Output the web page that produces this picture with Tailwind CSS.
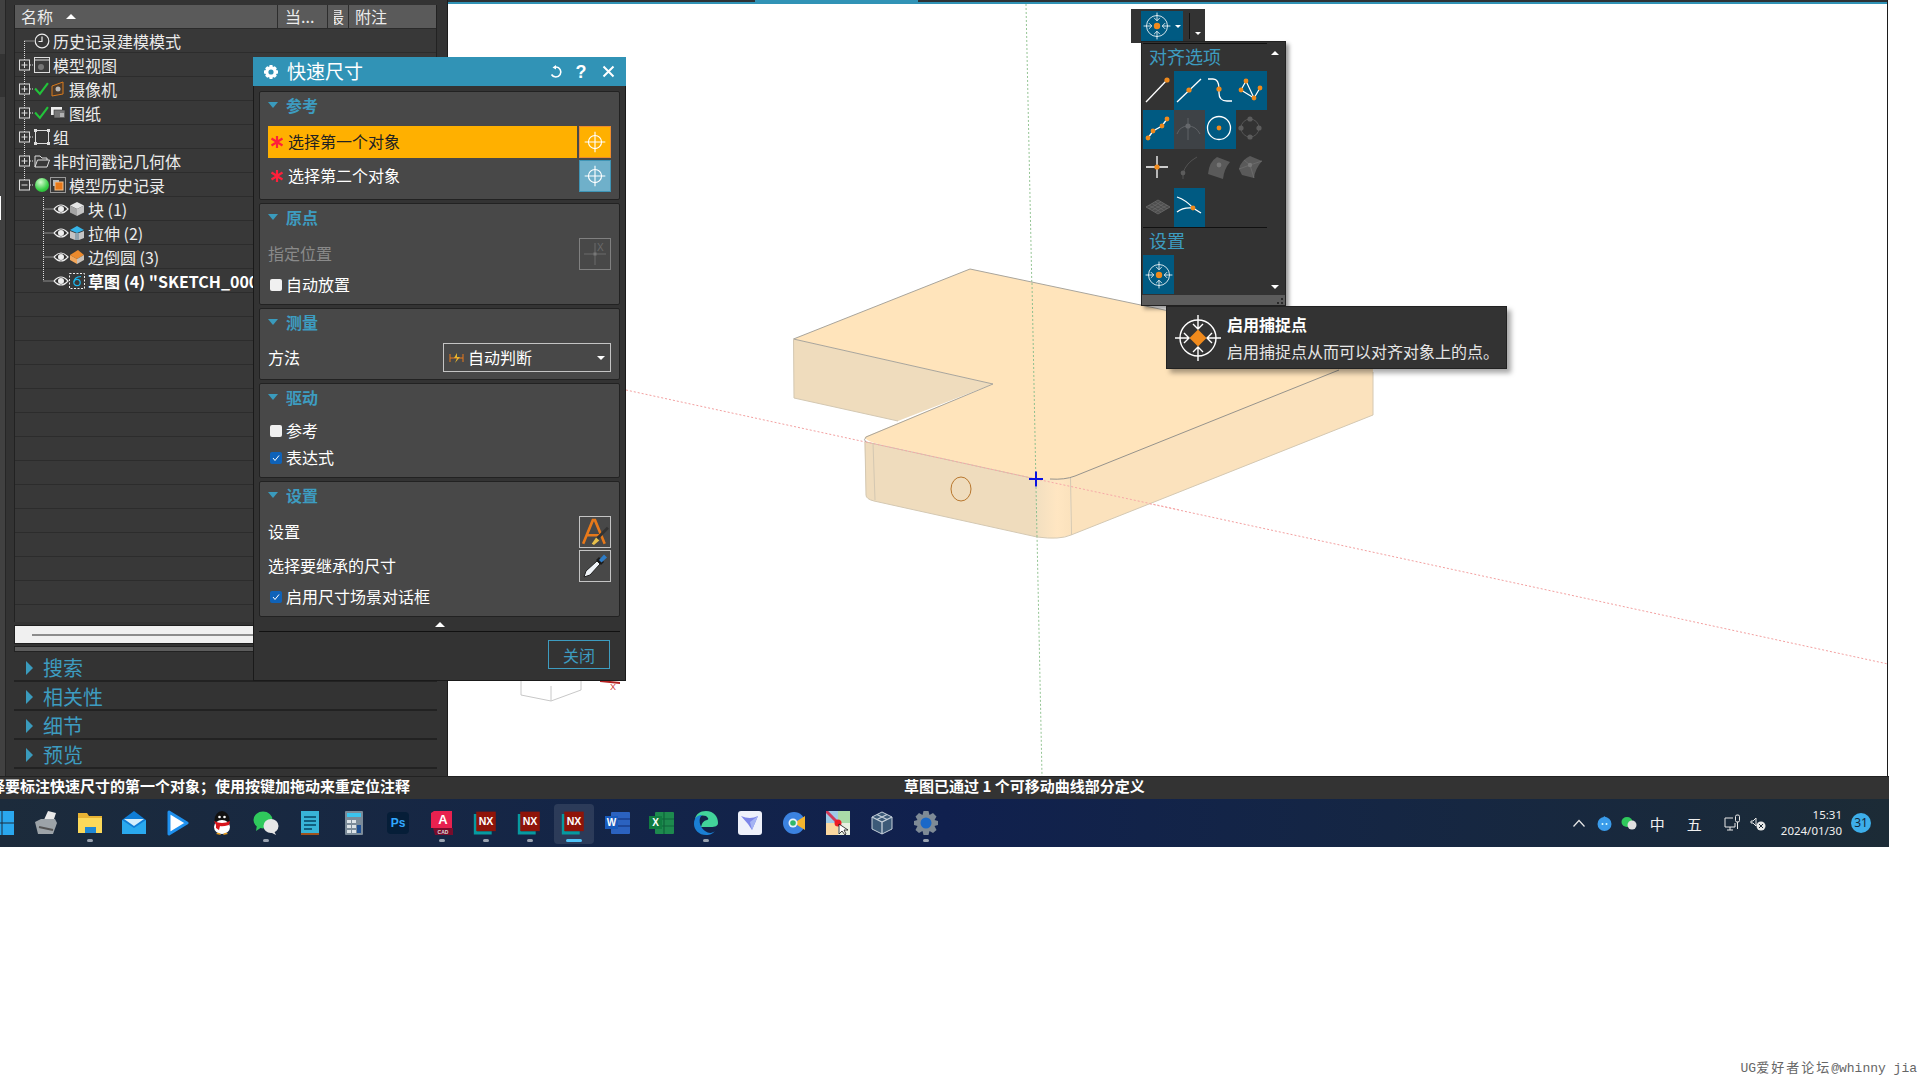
<!DOCTYPE html>
<html lang="en">
<head>
<meta charset="UTF-8">
<title>NX 快速尺寸</title>
<script src="https://cdn.jsdelivr.net/npm/@tailwindcss/browser@4"></script>
</head>
<body class="bg-white overflow-hidden [font-family:'Noto_Sans_CJK_SC',sans-serif]">

<!-- shared icons -->
<svg class="hidden" width="0" height="0">
  <defs>
    <symbol id="snap" viewBox="0 0 48 48">
      <g fill="none" stroke="#fff" stroke-width="1.4">
        <circle cx="24" cy="24" r="18"/>
        <path d="M24 1V15M19 10l5 5 5-5M24 47V33M19 38l5-5 5 5M1 24H15M10 19l5 5-5 5M47 24H33M38 19l-5 5 5 5"/>
      </g>
    </symbol>
    <symbol id="cross" viewBox="0 0 32 32">
      <g fill="none" stroke="#fff" stroke-width="1.2">
        <circle cx="16" cy="16" r="7"/>
        <path d="M16 5V27M5 16H27"/>
      </g>
    </symbol>
    <symbol id="star" viewBox="0 0 14 14">
      <path d="M7 1V13M1.5 3.5L12.5 10.5M12.5 3.5L1.5 10.5" stroke="#ff1f3a" stroke-width="2.2" fill="none"/>
    </symbol>
    <symbol id="eye" viewBox="0 0 16 14">
      <path d="M1 7Q8 -1 15 7Q8 15 1 7Z" fill="#333" stroke="#eee" stroke-width="1.2"/>
      <circle cx="8" cy="7" r="3" fill="#eee"/>
    </symbol>
    <symbol id="expand" viewBox="0 0 19 24">
      <path d="M9.5 0V24M15 12H19" stroke="#ddd" stroke-dasharray="1 1" fill="none"/>
      <rect x="4.5" y="7" width="10" height="10" fill="#383838" stroke="#ddd"/>
      <path d="M6.5 12H12.5M9.5 9V15" stroke="#ddd"/>
    </symbol>
    <symbol id="branch" viewBox="0 0 38 24">
      <path d="M28.5 0V24M28.5 12H38" stroke="#ddd" stroke-dasharray="1 1" fill="none"/>
    </symbol>
    <symbol id="check" viewBox="0 0 14 14">
      <path d="M1 7L5.5 12L13 2" stroke="#22c43a" stroke-width="2" fill="none"/>
    </symbol>
    <symbol id="nx" viewBox="0 0 32 32">
      <path d="M1 5H5V26H23V30H1Z" fill="#079aa0"/>
      <rect x="4" y="2" width="24" height="24" fill="#8e1409"/>
      <text x="16" y="19" text-anchor="middle" font-size="13" font-weight="700" fill="#fff" font-family="Liberation Sans">NX</text>
    </symbol>
  </defs>
</svg>

<div class="relative w-[1889px] h-[847px] overflow-hidden">
  <div class="flex h-[776px]">

    <!-- left navigator -->
    <div class="flex w-[448px] shrink-0 bg-[#333] border-r border-[#1c1c1c]">
      <div class="w-[5px] flex flex-col shrink-0">
        <div class="h-[54px] bg-[#414141]"></div>
        <div class="h-[43px] bg-[#333]"></div>
        <div class="h-[99px] bg-[#414141]"></div>
        <div class="h-[24px] bg-[#414141] border-l border-white"></div>
        <div class="flex-1 bg-[#414141]"></div>
      </div>
      <div class="w-[9px] shrink-0 border-l border-[#262626]"></div>

      <div class="w-[423px] shrink-0 flex flex-col">
        <!-- tree table -->
        <div class="mt-[5px] h-[617px] overflow-hidden border-x border-[#222] text-[16px] text-[#ececec] bg-[#383838]">
          <div class="flex h-[24px] bg-[#5a5a5a] border-b border-[#2a2a2a] leading-[23px]">
            <div class="w-[263px] border-r border-[#2d2d2d] pl-[6px] flex items-center gap-[13px]">
              <span>名称</span>
              <span class="w-0 h-0 border-x-[5px] border-x-transparent border-b-[5px] border-b-white"></span>
            </div>
            <div class="w-[50px] border-r border-[#2d2d2d] pl-[7px]">当...</div>
            <div class="w-[21px] border-r border-[#2d2d2d] pl-[6px]"><div class="w-[10px] overflow-hidden"><div class="-ml-[6px] w-[16px]">最</div></div></div>
            <div class="flex-1 pl-[6px]">附注</div>
          </div>

          <div class="flex items-center h-6 border-b border-[#2c2c2c] whitespace-nowrap">
            <svg class="w-[19px] h-6 shrink-0" viewBox="0 0 19 24"><path d="M9.5 12V24M9.5 12H19" stroke="#ddd" stroke-dasharray="1 1" fill="none"/></svg>
            <svg class="w-[16px] h-[16px] mr-[3px]" viewBox="0 0 16 16"><circle cx="8" cy="8" r="6.8" fill="none" stroke="#eee" stroke-width="1.2"/><path d="M8 3.5V8.5H4.5" fill="none" stroke="#eee" stroke-width="1.2"/></svg>
            <span>历史记录建模模式</span>
          </div>
          <div class="flex items-center h-6 border-b border-[#2c2c2c] whitespace-nowrap">
            <svg class="w-[19px] h-6 shrink-0"><use href="#expand"/></svg>
            <svg class="w-[16px] h-[16px] mr-[3px]" viewBox="0 0 16 16"><rect x="0.5" y="0.5" width="15" height="15" fill="#3c3c3c" stroke="#ddd"/><path d="M0.5 3H15.5" stroke="#ddd"/><circle cx="7" cy="10" r="3" fill="#777"/></svg>
            <span>模型视图</span>
          </div>
          <div class="flex items-center h-6 border-b border-[#2c2c2c] whitespace-nowrap">
            <svg class="w-[19px] h-6 shrink-0"><use href="#expand"/></svg>
            <svg class="w-[15px] h-[15px] mr-[2px]"><use href="#check"/></svg>
            <svg class="w-[14px] h-[16px] mr-[4px]" viewBox="0 0 14 16"><path d="M1 5L12 1V13L1 15Z" fill="#4a3a2c" stroke="#d97a1c"/><circle cx="7" cy="8" r="2.5" fill="#bbb"/></svg>
            <span>摄像机</span>
          </div>
          <div class="flex items-center h-6 border-b border-[#2c2c2c] whitespace-nowrap">
            <svg class="w-[19px] h-6 shrink-0"><use href="#expand"/></svg>
            <svg class="w-[15px] h-[15px] mr-[2px]"><use href="#check"/></svg>
            <svg class="w-[14px] h-[12px] mr-[4px]" viewBox="0 0 14 12"><rect x="0" y="0" width="11" height="8" fill="#eee"/><rect x="3" y="3" width="11" height="8" fill="#777" stroke="#333" stroke-width="0.6"/><path d="M9 7H13M9 9H13" stroke="#eee"/></svg>
            <span>图纸</span>
          </div>
          <div class="flex items-center h-6 border-b border-[#2c2c2c] whitespace-nowrap">
            <svg class="w-[19px] h-6 shrink-0"><use href="#expand"/></svg>
            <svg class="w-[16px] h-[16px] mr-[3px]" viewBox="0 0 16 16"><rect x="1.5" y="1.5" width="13" height="13" fill="none" stroke="#ddd"/><path d="M0 0h3v3H0zM13 0h3v3h-3zM0 13h3v3H0zM13 13h3v3h-3z" fill="#ddd"/></svg>
            <span>组</span>
          </div>
          <div class="flex items-center h-6 border-b border-[#2c2c2c] whitespace-nowrap">
            <svg class="w-[19px] h-6 shrink-0"><use href="#expand"/></svg>
            <svg class="w-[16px] h-[16px] mr-[3px]" viewBox="0 0 16 16"><path d="M1 14V3H6L8 5H13V7M1 14L3.5 7H15.5L13 14Z" fill="none" stroke="#ddd"/></svg>
            <span>非时间戳记几何体</span>
          </div>
          <div class="flex items-center h-6 border-b border-[#2c2c2c] whitespace-nowrap">
            <svg class="w-[19px] h-6 shrink-0" viewBox="0 0 19 24"><path d="M9.5 0V7M15 12H19" stroke="#ddd" stroke-dasharray="1 1" fill="none"/><rect x="4.5" y="7" width="10" height="10" fill="#383838" stroke="#ddd"/><path d="M6.5 12H12.5" stroke="#ddd"/></svg>
            <span class="w-[14px] h-[14px] ml-[1px] mr-[1px] rounded-full bg-[radial-gradient(circle_at_40%_30%,#d6fbd0,#36cf44_60%,#1f9a2c)]"></span>
            <svg class="w-[16px] h-[16px] mr-[3px]" viewBox="0 0 16 16"><rect x="0.5" y="0.5" width="15" height="15" fill="none" stroke="#999"/><rect x="5" y="5" width="8" height="8" fill="#e8791a" stroke="#f3c08a"/><path d="M3 3H9V5H5V9H3Z" fill="#bbb"/></svg>
            <span>模型历史记录</span>
          </div>
          <div class="flex items-center h-6 border-b border-[#2c2c2c] whitespace-nowrap">
            <svg class="w-[38px] h-6 shrink-0"><use href="#branch"/></svg>
            <svg class="w-[16px] h-[14px]"><use href="#eye"/></svg>
            <svg class="w-[16px] h-[16px] mr-[3px]" viewBox="0 0 16 16"><path d="M8 1L15 4.5L8 8L1 4.5Z" fill="#e4e4e4"/><path d="M1 4.5L8 8V15L1 11.5Z" fill="#a5a5a5"/><path d="M15 4.5L8 8V15L15 11.5Z" fill="#c4c4c4"/></svg>
            <span>块 (1)</span>
          </div>
          <div class="flex items-center h-6 border-b border-[#2c2c2c] whitespace-nowrap">
            <svg class="w-[38px] h-6 shrink-0"><use href="#branch"/></svg>
            <svg class="w-[16px] h-[14px]"><use href="#eye"/></svg>
            <svg class="w-[16px] h-[16px] mr-[3px]" viewBox="0 0 16 16"><path d="M8 1L15 5L8 8L1 5Z" fill="#36b4e8"/><path d="M1 6L6 8V15L1 13ZM15 6L10 8V15L15 13Z" fill="#c4c4c4"/><path d="M6 8H10V15H6Z" fill="#8fa2ad"/></svg>
            <span>拉伸 (2)</span>
          </div>
          <div class="flex items-center h-6 border-b border-[#2c2c2c] whitespace-nowrap">
            <svg class="w-[38px] h-6 shrink-0"><use href="#branch"/></svg>
            <svg class="w-[16px] h-[14px]"><use href="#eye"/></svg>
            <svg class="w-[16px] h-[16px] mr-[3px]" viewBox="0 0 16 16"><path d="M9 1L15 6L8 10L1 6Z" fill="#ec8a2c"/><path d="M1 6L8 10V15L1 11Z" fill="#f2a65a"/><path d="M15 6L8 10V15L15 11Z" fill="#c7c0b8"/></svg>
            <span>边倒圆 (3)</span>
          </div>
          <div class="flex items-center h-6 border-b border-[#2c2c2c] whitespace-nowrap font-bold text-white">
            <svg class="w-[38px] h-6 shrink-0" viewBox="0 0 38 24"><path d="M28.5 0V12H38" stroke="#ddd" stroke-dasharray="1 1" fill="none"/></svg>
            <svg class="w-[16px] h-[14px]"><use href="#eye"/></svg>
            <svg class="w-[16px] h-[16px] mr-[3px]" viewBox="0 0 16 16"><rect x="0.5" y="0.5" width="15" height="15" fill="none" stroke="#eee" stroke-dasharray="2 1.5"/><circle cx="8" cy="9.5" r="3.2" fill="none" stroke="#1cb8ee" stroke-width="1.2"/><path d="M5 9Q5 4 12 3.5" fill="none" stroke="#1cb8ee" stroke-width="1.2"/></svg>
            <span>草图 (4) "SKETCH_000"</span>
          </div>
          <div class="h-6 border-b border-[#2c2c2c]"></div>
          <div class="h-6 border-b border-[#2c2c2c]"></div>
          <div class="h-6 border-b border-[#2c2c2c]"></div>
          <div class="h-6 border-b border-[#2c2c2c]"></div>
          <div class="h-6 border-b border-[#2c2c2c]"></div>
          <div class="h-6 border-b border-[#2c2c2c]"></div>
          <div class="h-6 border-b border-[#2c2c2c]"></div>
          <div class="h-6 border-b border-[#2c2c2c]"></div>
          <div class="h-6 border-b border-[#2c2c2c]"></div>
          <div class="h-6 border-b border-[#2c2c2c]"></div>
          <div class="h-6 border-b border-[#2c2c2c]"></div>
          <div class="h-6 border-b border-[#2c2c2c]"></div>
          <div class="h-6 border-b border-[#2c2c2c]"></div>
          <div class="h-6 border-b border-[#2c2c2c]"></div>
          <div class="h-6 border-b border-[#2c2c2c]"></div>
        </div>

        <!-- scrollbars -->
        <div class="mt-[3px] h-[19px] bg-[#f0f0f0] border border-[#1f1f1f] flex items-center pl-[17px]"><div class="w-[300px] h-[2px] bg-[#8c8c8c]"></div></div>
        <div class="mt-[2px] h-[6px] bg-[#5c5c5c] border border-[#222]"></div>

        <!-- collapsed groups -->
        <div class="h-[30px] flex items-center border-b-2 border-[#222] pt-[3px] pl-[12px] gap-[10px] text-[20px] text-[#3d9cc0]">
          <span class="w-0 h-0 border-y-[7px] border-y-transparent border-l-[7px] border-l-[#3a9bbd]"></span><span>搜索</span>
        </div>
        <div class="h-[29px] flex items-center border-b-2 border-[#222] pt-[3px] pl-[12px] gap-[10px] text-[20px] text-[#3d9cc0]">
          <span class="w-0 h-0 border-y-[7px] border-y-transparent border-l-[7px] border-l-[#3a9bbd]"></span><span>相关性</span>
        </div>
        <div class="h-[29px] flex items-center border-b-2 border-[#222] pt-[2px] pl-[12px] gap-[10px] text-[20px] text-[#3d9cc0]">
          <span class="w-0 h-0 border-y-[7px] border-y-transparent border-l-[7px] border-l-[#3a9bbd]"></span><span>细节</span>
        </div>
        <div class="h-[29px] flex items-center border-b-2 border-[#222] pt-[2px] pl-[12px] gap-[10px] text-[20px] text-[#3d9cc0]">
          <span class="w-0 h-0 border-y-[7px] border-y-transparent border-l-[7px] border-l-[#3a9bbd]"></span><span>预览</span>
        </div>
      </div>
    </div>

    <!-- graphics window -->
    <div class="w-[1440px] shrink-0 flex flex-col border-r border-[#1c1c1c]">
      <div class="flex h-[2px] bg-[#2e3236]"><div class="w-[307px]"></div><div class="w-[163px] bg-[#3193b6]"></div></div>
      <div class="h-[2px] bg-[#3193b6]"></div>
      <svg class="block w-[1440px] h-[772px]" viewBox="448 4 1440 772">
        <defs>
          <linearGradient id="corner" x1="0" x2="1" y1="0" y2="0">
            <stop offset="0" stop-color="#f2dfc0"/><stop offset="0.6" stop-color="#ffe6c2"/><stop offset="1" stop-color="#fbe2bd"/>
          </linearGradient>
        </defs>
        <!-- axes behind the part -->
        <path d="M1026 4L1042 776" stroke="#94c594" stroke-dasharray="2 2"/>
        <path d="M626 390L1888 664" stroke="#f3a0a0" stroke-dasharray="2 2"/>
        <!-- side faces -->
        <path d="M793.5 339L993 384L898 421L794 398Z" fill="#efdcbd"/>
        <path d="M864.5 442L1036 479L1037 537L874 501Q866 499 866 495Z" fill="#efdcbd"/>
        <path d="M1036 479L1070 478L1071 535Q1060 539 1049 538L1037 537Z" fill="url(#corner)"/>
        <path d="M1070 478L1373 350V415L1071 535Z" fill="#fbe2bd"/>
        <!-- top face -->
        <path d="M970 269L1373 354L1339 370L1075 476Q1065 480 1050 479L1036 479L878 444Q866 441 864.5 437L993 384L793.5 339Z" fill="#ffe4bb"/>
        <!-- edges -->
        <g fill="none" stroke="#a9a59c" stroke-width="1">
          <path d="M793.5 339L970 269L1373 354"/>
          <path d="M793.5 339L993 384L866 437Q863 440 866 442"/>
          <path d="M1050 479Q1065 480 1075 476L1339 370" stroke="#96938c"/>
        </g>
        <g fill="none" stroke="#d4c8b2" stroke-width="1">
          <path d="M793.5 339L794 398L898 421"/>
          <path d="M865 442L866 495Q866 499 874 501L1037 537Q1060 540 1071 535L1373 415V372"/>
          <path d="M873 443L875 500M1070.5 478L1071.5 535"/>
        </g>
        <path d="M866 442L1036 479" stroke="#d2c3aa" fill="none"/>
        <path d="M866 442L1036 479M1036 479L1180 510" stroke="#f7a8a8" stroke-dasharray="2 2" fill="none"/>
        <path d="M1032 283L1037 537" stroke="#8fbf8f" stroke-dasharray="2 2" fill="none"/>
        <ellipse cx="961" cy="489" rx="10" ry="12" fill="none" stroke="#b8772e"/>
        <path d="M1036 471.5V486.5M1029 479H1043" stroke="#0a12e0" stroke-width="2" fill="none"/>
        <!-- WCS triad below the dialog -->
        <path d="M521 677V695L551 701L581 690V677M551 701V686" fill="none" stroke="#c8c8c8"/>
        <path d="M600 680L620 682V684L600 682Z" fill="#b32020"/>
        <text x="610" y="690" font-size="9" fill="#d24040" font-family="Liberation Sans">X</text>
      </svg>
    </div>
  </div>

  <!-- status bar -->
  <div class="flex items-center h-[23px] pb-[3px] bg-[#333] border-t border-[#222] text-white font-bold text-[15px] whitespace-nowrap">
    <div class="w-[904px] overflow-hidden shrink-0"><div class="-ml-[10px]">择要标注快速尺寸的第一个对象；使用按键加拖动来重定位注释</div></div>
    <div>草图已通过 1 个可移动曲线部分定义</div>
  </div>

  <!-- taskbar -->
  <div class="flex items-center h-[48px] bg-linear-to-r from-[#1c2b3b] via-[#10204e] to-[#1c2b36]">
    <div class="-ml-[20px] flex">
      <div class="w-[44px] h-[47px] flex items-center justify-center">
        <svg class="w-[24px] h-[24px]" viewBox="0 0 24 24"><path d="M0 0H11.5V11.5H0ZM12.5 0H24V11.5H12.5ZM0 12.5H11.5V24H0ZM12.5 12.5H24V24H12.5Z" fill="#2aa7ee"/></svg>
      </div>
      <div class="w-[44px] h-[47px] flex items-center justify-center">
        <svg class="w-[26px] h-[26px]" viewBox="0 0 26 26"><path d="M15 1L23 3L20 12H10Z" fill="#e8e8e8"/><path d="M2 12L8 9H22L24 13L20 24H5Z" fill="#9ca3a8"/><path d="M6 17L20 20" stroke="#555" stroke-width="2"/></svg>
      </div>
      <div class="relative w-[44px] h-[47px] flex items-center justify-center">
        <svg class="w-[26px] h-[26px]" viewBox="0 0 26 26"><path d="M1 3H10L12 6H25V23H1Z" fill="#e8b434"/><path d="M1 8H25V23H1Z" fill="#fbd95a"/><rect x="8" y="17" width="11" height="6" fill="#1e88d6"/></svg>
        <span class="absolute bottom-[5px] w-[6px] h-[3px] rounded-full bg-[#9aa3b0]"></span>
      </div>
      <div class="w-[44px] h-[47px] flex items-center justify-center">
        <svg class="w-[26px] h-[26px]" viewBox="0 0 26 26"><path d="M1 10L13 1L25 10V24H1Z" fill="#0f7dd6"/><path d="M1 10L13 18L25 10V24H1Z" fill="#2aa9ee"/><path d="M3 9H23L13 16Z" fill="#d5eefc"/></svg>
      </div>
      <div class="w-[44px] h-[47px] flex items-center justify-center">
        <svg class="w-[22px] h-[26px]" viewBox="0 0 22 26"><path d="M2 2L20 13L2 24Z" fill="#fff" stroke="#1e90ee" stroke-width="3" stroke-linejoin="round"/></svg>
      </div>
      <div class="w-[44px] h-[47px] flex items-center justify-center">
        <svg class="w-[22px] h-[26px]" viewBox="0 0 22 26"><ellipse cx="11" cy="10" rx="7.5" ry="9" fill="#111"/><ellipse cx="11" cy="17" rx="8" ry="7" fill="#fff"/><path d="M3 11Q11 15 19 11L18 15Q11 17 9 16L8 20L5 18V15Z" fill="#d8141c"/><path d="M5 24Q8 21 10 25ZM12 25Q14 21 17 24Z" fill="#f0a21e"/><circle cx="8.5" cy="7" r="1.3" fill="#fff"/><circle cx="13.5" cy="7" r="1.3" fill="#fff"/></svg>
      </div>
      <div class="relative w-[44px] h-[47px] flex items-center justify-center">
        <svg class="w-[26px] h-[24px]" viewBox="0 0 26 24"><ellipse cx="10" cy="9" rx="9.5" ry="8.5" fill="#2fc95c"/><path d="M4 14L3 20L9 16Z" fill="#2fc95c"/><ellipse cx="18" cy="15" rx="7.5" ry="7" fill="#e6e6e6"/><path d="M21 20L23 24L17 21Z" fill="#e6e6e6"/></svg>
        <span class="absolute bottom-[5px] w-[6px] h-[3px] rounded-full bg-[#9aa3b0]"></span>
      </div>
      <div class="w-[44px] h-[47px] flex items-center justify-center">
        <svg class="w-[20px] h-[26px]" viewBox="0 0 20 26"><rect x="1" y="1" width="18" height="24" fill="#38b4d8"/><rect x="1" y="23" width="18" height="2" fill="#a0521c"/><path d="M4 7H16M4 11H16M4 15H16M4 19H12" stroke="#115f80" stroke-width="2"/></svg>
      </div>
      <div class="w-[44px] h-[47px] flex items-center justify-center">
        <svg class="w-[20px] h-[26px]" viewBox="0 0 20 26"><rect x="1" y="1" width="18" height="24" rx="1" fill="#7b8b99"/><rect x="3" y="3" width="14" height="4" fill="#3bc4ee"/><path d="M3 10h4v3H3zM8 10h4v3H8zM3 15h4v3H3zM8 15h4v3H8zM3 20h4v3H3zM8 20h4v3H8z" fill="#dce3e8"/><rect x="13" y="15" width="4" height="8" fill="#1e4f92"/></svg>
      </div>
      <div class="w-[44px] h-[47px] flex items-center justify-center">
        <div class="w-[22px] h-[22px] rounded-[4px] bg-[#061e38] text-[#31a8ff] text-[12px] font-bold flex items-center justify-center [font-family:'Liberation_Sans',sans-serif]">Ps</div>
      </div>
      <div class="relative w-[44px] h-[47px] flex items-center justify-center">
        <svg class="w-[24px] h-[26px]" viewBox="0 0 24 26"><path d="M1 3L4 1H22V18H1Z" fill="#e8214f"/><path d="M3 18H23V25H5Z" fill="#7a0c2c"/><text x="13" y="14" text-anchor="middle" font-size="13" font-weight="700" fill="#fff" font-family="Liberation Sans">A</text><text x="13" y="24" text-anchor="middle" font-size="5" font-weight="700" fill="#ddd" font-family="Liberation Sans">CAD</text></svg>
        <span class="absolute bottom-[5px] w-[6px] h-[3px] rounded-full bg-[#9aa3b0]"></span>
      </div>
      <div class="relative w-[44px] h-[47px] flex items-center justify-center">
        <svg class="w-[26px] h-[26px]"><use href="#nx"/></svg>
        <span class="absolute bottom-[5px] w-[6px] h-[3px] rounded-full bg-[#9aa3b0]"></span>
      </div>
      <div class="relative w-[44px] h-[47px] flex items-center justify-center">
        <svg class="w-[26px] h-[26px]"><use href="#nx"/></svg>
        <span class="absolute bottom-[5px] w-[6px] h-[3px] rounded-full bg-[#9aa3b0]"></span>
      </div>
      <div class="relative w-[44px] h-[47px] flex items-center justify-center">
        <span class="absolute left-[2px] top-[4px] w-[40px] h-[40px] rounded-[4px] bg-white/10"></span>
        <svg class="relative w-[26px] h-[26px]"><use href="#nx"/></svg>
        <span class="absolute bottom-[5px] w-[16px] h-[3px] rounded-full bg-[#4fc3f7]"></span>
      </div>
      <div class="w-[44px] h-[47px] flex items-center justify-center">
        <svg class="w-[26px] h-[24px]" viewBox="0 0 26 24"><rect x="6" y="1" width="19" height="22" rx="1" fill="#2b62c0"/><path d="M6 8H25M6 15H25" stroke="#1a3f8c" stroke-width="1.5"/><rect x="0" y="5" width="13" height="13" fill="#185abd"/><text x="6.5" y="15" text-anchor="middle" font-size="10" font-weight="700" fill="#fff" font-family="Liberation Sans">W</text></svg>
      </div>
      <div class="w-[44px] h-[47px] flex items-center justify-center">
        <svg class="w-[26px] h-[24px]" viewBox="0 0 26 24"><rect x="6" y="1" width="19" height="22" rx="1" fill="#1d8a4e"/><path d="M15 1V23M6 8H25M6 15H25" stroke="#10633a" stroke-width="1.2"/><rect x="0" y="5" width="13" height="13" fill="#107c41"/><text x="6.5" y="15" text-anchor="middle" font-size="10" font-weight="700" fill="#fff" font-family="Liberation Sans">X</text></svg>
      </div>
      <div class="relative w-[44px] h-[47px] flex items-center justify-center">
        <svg class="w-[26px] h-[26px]" viewBox="0 0 26 26"><path d="M13 1C21 1 25 7 25 13C25 16 22 17 18 17H8Q9 11 14 10Q17 9 13 6Q7 4 2 9C3 4 7 1 13 1Z" fill="#42d39a"/><path d="M1 14C1 7 5 5 9 5C5 8 6 17 12 21C16 24 20 23 22 21C19 25 15 25 13 25C6 25 1 20 1 14Z" fill="#1a7fd4"/></svg>
        <span class="absolute bottom-[5px] w-[6px] h-[3px] rounded-full bg-[#9aa3b0]"></span>
      </div>
      <div class="w-[44px] h-[47px] flex items-center justify-center">
        <svg class="w-[24px] h-[24px]" viewBox="0 0 24 24"><rect width="24" height="24" rx="3" fill="#eef1fb"/><path d="M3 5Q12 9 20 5L14 19L10 13Z" fill="#7c85e8"/><path d="M20 5L14 19L12 11Z" fill="#a5b4f4"/></svg>
      </div>
      <div class="w-[44px] h-[47px] flex items-center justify-center">
        <svg class="w-[22px] h-[22px]" viewBox="0 0 22 22"><circle cx="11" cy="11" r="11" fill="#3b82e0"/><path d="M11 11L22 4V18Z" fill="#f4b52e"/><circle cx="10" cy="11" r="4.5" fill="#e8f0fb"/><circle cx="10" cy="11" r="2.8" fill="#2fb86a"/></svg>
      </div>
      <div class="w-[44px] h-[47px] flex items-center justify-center">
        <svg class="w-[24px] h-[24px]" viewBox="0 0 24 24"><rect width="12" height="12" fill="#9ecbe8"/><rect x="12" width="12" height="12" fill="#a9dba8"/><rect y="12" width="12" height="12" fill="#fbd8a0"/><rect x="12" y="12" width="12" height="12" fill="#e8efe0"/><path d="M0 0L12 12" stroke="#cf3a5a" stroke-width="3"/><circle cx="12" cy="12" r="3.5" fill="#ee1c25"/><path d="M13 13V23L16 20L19 24L20 23L18 19H22Z" fill="#fff" stroke="#111" stroke-width="0.8"/></svg>
      </div>
      <div class="w-[44px] h-[47px] flex items-center justify-center">
        <svg class="w-[24px] h-[24px]" viewBox="0 0 24 24"><path d="M12 1L22 6V18L12 23L2 18V6Z" fill="#3c5a78" stroke="#c6d0da"/><path d="M2 6L12 11L22 6M12 11V23M7 3.5L17 8.5M17 3.5L7 8.5" fill="none" stroke="#c6d0da" stroke-width="1.3"/></svg>
      </div>
      <div class="relative w-[44px] h-[47px] flex items-center justify-center">
        <svg class="w-[26px] h-[26px]" viewBox="0 0 26 26"><path d="M10.5 1H15.5L16.5 5L20 3L23.5 6.5L21.5 10L25 11V15L21.5 16L23.5 20L20 23L16.5 21L15.5 25H10.5L9.5 21L6 23L2.5 20L4.5 16L1 15V11L4.5 10L2.5 6.5L6 3L9.5 5Z" fill="#7e8a96"/><circle cx="13" cy="13" r="5.5" fill="#1a68c8"/></svg>
        <span class="absolute bottom-[5px] w-[6px] h-[3px] rounded-full bg-[#9aa3b0]"></span>
      </div>
    </div>

    <!-- tray -->
    <div class="ml-auto flex items-center text-[#f0f0f0]">
      <svg class="w-[12px] h-[8px] mr-[12px]" viewBox="0 0 12 8"><path d="M0.5 7.5L6 1.5L11.5 7.5" stroke="#e8e8e8" stroke-width="1.2" fill="none"/></svg>
      <svg class="w-[15px] h-[16px] mr-[9px]" viewBox="0 0 15 16"><circle cx="7.5" cy="9" r="7" fill="#3a9bea"/><path d="M7 1L10 3L6 4Z" fill="#3a9bea"/><circle cx="5.5" cy="9" r="1" fill="#dff"/><circle cx="9.5" cy="9" r="1" fill="#dff"/></svg>
      <svg class="w-[16px] h-[14px] mr-[13px]" viewBox="0 0 16 14"><ellipse cx="6" cy="6" rx="5.5" ry="5" fill="#2fc95c"/><ellipse cx="11" cy="9" rx="4.5" ry="4.5" fill="#e0e0e0"/></svg>
      <span class="w-[16px] text-[15px] leading-none mr-[21px]">中</span>
      <span class="w-[16px] text-[15px] leading-none mr-[21px]">五</span>
      <svg class="w-[17px] h-[18px] mr-[9px]" viewBox="0 0 17 18"><path d="M9 4H1V13H11V9M3 16H9M6 13V16" fill="none" stroke="#e8e8e8"/><rect x="11.5" y="1" width="4" height="7" rx="1.5" fill="none" stroke="#e8e8e8"/><path d="M13.5 8V15" stroke="#e8e8e8"/></svg>
      <svg class="w-[16px] h-[16px] mr-[15px]" viewBox="0 0 16 16"><path d="M1 6H3L6 3V11L3 8H1Z" fill="none" stroke="#e8e8e8"/><circle cx="11" cy="11" r="4.5" fill="#e8e8e8"/><path d="M9 9L13 13M13 9L9 13" stroke="#1c2b36"/></svg>
      <div class="flex flex-col items-end text-[11.5px] leading-[16px] mr-[9px] [font-family:'Noto_Sans',sans-serif]">
        <span>15:31</span>
        <span>2024/01/30</span>
      </div>
      <span class="w-[20px] h-[20px] rounded-full bg-[#3daeea] text-[#12263a] text-[12px] flex items-center justify-center mr-[18px] [font-family:'Noto_Sans',sans-serif]">31</span>
    </div>
  </div>

  <!-- quick dimension dialog -->
  <div class="absolute left-[253px] top-[57px] w-[373px] h-[624px] bg-[#333] border-x border-b border-[#1a1a1a] text-[16px] text-white">
    <div class="-mx-px h-[29px] bg-[#3193b6] flex items-center pl-[11px] pr-[11px]">
      <svg class="w-[14px] h-[14px] mr-[9px]" viewBox="0 0 14 14"><path d="M5.6 0H8.4L8.9 2L10.8 1.2L12.8 3.2L12 5.1L14 5.6V8.4L12 8.9L12.8 10.8L10.8 12.8L8.9 12L8.4 14H5.6L5.1 12L3.2 12.8L1.2 10.8L2 8.9L0 8.4V5.6L2 5.1L1.2 3.2L3.2 1.2L5.1 2Z" fill="#fff"/><circle cx="7" cy="7" r="2.6" fill="#3193b6"/></svg>
      <span class="text-[19px] leading-none pb-[2px]">快速尺寸</span>
      <svg class="ml-auto w-[14px] h-[14px]" viewBox="0 0 14 14"><path d="M7 2A5 5 0 1 1 2.5 9.5" fill="none" stroke="#fff" stroke-width="1.6"/><path d="M7 0L3.5 2.5L7 4.5Z" fill="#fff"/></svg>
      <span class="ml-[12px] w-[12px] text-center text-[18px] font-bold leading-none [font-family:'Liberation_Sans',sans-serif]">?</span>
      <svg class="ml-[15px] w-[13px] h-[13px]" viewBox="0 0 13 13"><path d="M1.5 1.5L11.5 11.5M11.5 1.5L1.5 11.5" stroke="#fff" stroke-width="2"/></svg>
    </div>

    <div class="px-[5px] pt-[5px] flex flex-col gap-[3px]">
      <!-- 参考 -->
      <div class="h-[109px] bg-[#484848] border border-[#222] rounded-[2px] px-[8px]">
        <div class="h-[31px] pb-[5px] flex items-center gap-[8px]"><span class="w-0 h-0 border-x-[5px] border-x-transparent border-t-[6px] border-t-[#3a9bbd]"></span><span class="font-bold text-[#3d9cc0]">参考</span></div>
        <div class="mt-[3px] flex h-[32px] gap-[2px]">
          <div class="flex-1 bg-[#ffb000] flex items-center pl-[2px] gap-[4px] text-[#222]"><svg class="w-[14px] h-[14px]"><use href="#star"/></svg><span class="pb-[2px]">选择第一个对象</span></div>
          <div class="w-[32px] bg-[#ffb000] border border-[#ee8c2c] flex items-center justify-center"><svg class="w-[30px] h-[30px]"><use href="#cross"/></svg></div>
        </div>
        <div class="mt-[2px] flex h-[32px] gap-[2px]">
          <div class="flex-1 flex items-center pl-[2px] gap-[4px]"><svg class="w-[14px] h-[14px]"><use href="#star"/></svg><span class="pb-[2px]">选择第二个对象</span></div>
          <div class="w-[32px] bg-[#6fb0ca] border border-[#3f95b6] flex items-center justify-center"><svg class="w-[30px] h-[30px]"><use href="#cross"/></svg></div>
        </div>
      </div>

      <!-- 原点 -->
      <div class="h-[102px] bg-[#484848] border border-[#222] rounded-[2px] px-[8px]">
        <div class="h-[31px] pb-[5px] flex items-center gap-[8px]"><span class="w-0 h-0 border-x-[5px] border-x-transparent border-t-[6px] border-t-[#3a9bbd]"></span><span class="font-bold text-[#3d9cc0]">原点</span></div>
        <div class="mt-[3px] flex h-[32px] items-center justify-between">
          <span class="pb-[2px] text-[#8a8a8a]">指定位置</span>
          <div class="w-[32px] h-[32px] border border-[#808080] flex items-center justify-center">
            <svg class="w-[30px] h-[30px]" viewBox="0 0 30 30"><path d="M15 4V26M4 15H26" stroke="#6a6a6a"/><rect x="13.5" y="13.5" width="3" height="3" fill="#777"/><text x="17" y="12" font-size="10" fill="#6a6a6a" font-family="Liberation Sans">X</text></svg>
          </div>
        </div>
        <div class="mt-[5px] h-[20px] flex items-center gap-[4px] pl-[2px]"><span class="w-[12px] h-[12px] rounded-[2px] bg-[#f0f0f0]"></span><span class="pb-[2px]">自动放置</span></div>
      </div>

      <!-- 测量 -->
      <div class="h-[72px] bg-[#484848] border border-[#222] rounded-[2px] px-[8px]">
        <div class="h-[31px] pb-[5px] flex items-center gap-[8px]"><span class="w-0 h-0 border-x-[5px] border-x-transparent border-t-[6px] border-t-[#3a9bbd]"></span><span class="font-bold text-[#3d9cc0]">测量</span></div>
        <div class="mt-[3px] flex items-center justify-between">
          <span class="pb-[2px]">方法</span>
          <div class="w-[168px] h-[29px] border border-[#c4c4c4] flex items-center pl-[5px] pr-[5px]">
            <svg class="w-[15px] h-[10px] mr-[4px]" viewBox="0 0 15 10"><path d="M1 1V9M14 1V9M1 5H14" stroke="#e8791a" fill="none"/><path d="M8 0L5 5H8L6 10L11 4H8Z" fill="#e8b42c"/></svg>
            <span class="pb-[2px]">自动判断</span>
            <span class="ml-auto w-0 h-0 border-x-[4px] border-x-transparent border-t-[4px] border-t-white"></span>
          </div>
        </div>
      </div>

      <!-- 驱动 -->
      <div class="h-[95px] bg-[#484848] border border-[#222] rounded-[2px] px-[8px]">
        <div class="h-[31px] pb-[5px] flex items-center gap-[8px]"><span class="w-0 h-0 border-x-[5px] border-x-transparent border-t-[6px] border-t-[#3a9bbd]"></span><span class="font-bold text-[#3d9cc0]">驱动</span></div>
        <div class="mt-[4px] h-[24px] flex items-center gap-[4px] pl-[2px]"><span class="w-[12px] h-[12px] rounded-[2px] bg-[#f0f0f0]"></span><span class="pb-[2px]">参考</span></div>
        <div class="mt-[3px] h-[24px] flex items-center gap-[4px] pl-[2px]">
          <span class="w-[12px] h-[12px] rounded-[2px] bg-[#0f62b8] flex items-center justify-center"><svg class="w-[8px] h-[8px]" viewBox="0 0 8 8"><path d="M1 4L3 6.5L7 1.5" stroke="#fff" fill="none"/></svg></span>
          <span class="pb-[2px]">表达式</span>
        </div>
      </div>

      <!-- 设置 -->
      <div class="h-[136px] bg-[#484848] border border-[#222] rounded-[2px] px-[8px]">
        <div class="h-[31px] pb-[5px] flex items-center gap-[8px]"><span class="w-0 h-0 border-x-[5px] border-x-transparent border-t-[6px] border-t-[#3a9bbd]"></span><span class="font-bold text-[#3d9cc0]">设置</span></div>
        <div class="mt-[3px] flex h-[32px] items-center justify-between">
          <span class="pb-[2px]">设置</span>
          <div class="w-[32px] h-[32px] border border-[#c4c4c4] flex items-center justify-center">
            <svg class="w-[28px] h-[28px]" viewBox="0 0 26 26"><path d="M2 24L11 2H13L22 24M6 16H18" fill="none" stroke="#e8791a" stroke-width="2.4"/><path d="M25 9L15 19" stroke="#333" stroke-width="2.5"/><path d="M14 18L17 21L12 25L10 24Z" fill="#e8c04a"/></svg>
          </div>
        </div>
        <div class="mt-[2px] flex h-[32px] items-center justify-between">
          <span class="pb-[2px]">选择要继承的尺寸</span>
          <div class="w-[32px] h-[32px] border border-[#c4c4c4] flex items-center justify-center">
            <svg class="w-[26px] h-[26px]" viewBox="0 0 26 26"><path d="M2 24L4 18L15 8L18 11L8 22Z" fill="#f0f4f8" stroke="#222"/><path d="M14 7L19 12L22 9L17 4Z" fill="#1a1a1a"/><path d="M17 7L22 1.5L25 4.5L19.5 9.5Z" fill="#2e7dc8"/></svg>
          </div>
        </div>
        <div class="mt-[5px] h-[20px] flex items-center gap-[4px] pl-[2px]">
          <span class="w-[12px] h-[12px] rounded-[2px] bg-[#0f62b8] flex items-center justify-center"><svg class="w-[8px] h-[8px]" viewBox="0 0 8 8"><path d="M1 4L3 6.5L7 1.5" stroke="#fff" fill="none"/></svg></span>
          <span class="pb-[2px]">启用尺寸场景对话框</span>
        </div>
      </div>
    </div>

    <div class="h-[15px] mx-[5px] border-b border-[#111] flex items-center justify-center"><span class="w-0 h-0 border-x-[5px] border-x-transparent border-b-[5px] border-b-white"></span></div>
    <div class="flex justify-end pr-[15px] pt-[8px]">
      <div class="w-[62px] h-[29px] border border-[#3d9cc0] text-[#3d9cc0] flex items-center justify-center">关闭</div>
    </div>
  </div>

  <!-- snap toolbar -->
  <div class="absolute left-[1131px] top-[9px] w-[74px] h-[34px] bg-[#333] flex items-start pl-[10px] pt-[2px]">
    <div class="w-[42px] h-[30px] bg-[#005a82] flex items-center pl-[2px]">
      <svg class="w-[28px] h-[28px]" viewBox="0 0 48 48"><use href="#snap"/><circle cx="24" cy="24" r="5.5" fill="#f08a1c"/></svg>
      <span class="ml-[4px] w-0 h-0 border-x-[3px] border-x-transparent border-t-[3px] border-t-white"></span>
    </div>
    <div class="ml-[6px] mt-[2px] w-px h-[26px] bg-[#111]"></div>
    <span class="ml-[5px] mt-[21px] w-0 h-0 border-x-[3px] border-x-transparent border-t-[3px] border-t-white"></span>
  </div>

  <!-- snap options popup -->
  <div class="absolute left-[1141px] top-[41px] w-[145px] h-[265px] bg-[#333] border border-[#222] pl-px shadow-[3px_3px_4px_rgba(0,0,0,0.4)] text-[18px] text-[#3d9cc0]">
    <div class="mt-px w-[124px] h-px bg-[#111]"></div>
    <div class="h-[27px] pl-[6px] leading-[25px]">对齐选项</div>
    <div class="grid grid-cols-[repeat(4,31px)] auto-rows-[39px]">
      <div><svg class="w-[31px] h-[39px]" viewBox="0 0 31 39"><path d="M3 31L24 9" stroke="#fff" stroke-width="1.3"/><circle cx="24" cy="9" r="2.6" fill="#f08a1c"/></svg></div>
      <div class="bg-[#005a82]"><svg class="w-[31px] h-[39px]" viewBox="0 0 31 39"><path d="M3 31L27 8" stroke="#fff" stroke-width="1.3"/><circle cx="15" cy="19" r="2.6" fill="#f08a1c"/></svg></div>
      <div class="bg-[#005a82]"><svg class="w-[31px] h-[39px]" viewBox="0 0 31 39"><path d="M3 8H8Q14 8 14 18V22Q14 30 22 30H27" fill="none" stroke="#fff" stroke-width="1.3"/><circle cx="14" cy="18" r="2.6" fill="#f08a1c"/></svg></div>
      <div class="bg-[#005a82]"><svg class="w-[31px] h-[39px]" viewBox="0 0 31 39"><path d="M5 19L10 10L18 27L24 17M5 19L18 27" fill="none" stroke="#fff" stroke-width="1.2"/><circle cx="10" cy="10" r="2.4" fill="#f08a1c"/><circle cx="5" cy="19" r="2.4" fill="#f08a1c"/><circle cx="18" cy="27" r="2.4" fill="#f08a1c"/><circle cx="24" cy="17" r="2.4" fill="#f08a1c"/></svg></div>

      <div class="bg-[#005a82]"><svg class="w-[31px] h-[39px]" viewBox="0 0 31 39"><path d="M5 28L10 21L19 16L24 9" fill="none" stroke="#fff" stroke-width="1.3"/><circle cx="5" cy="28" r="2.4" fill="#f08a1c"/><circle cx="10" cy="21" r="2.4" fill="#f08a1c"/><circle cx="19" cy="16" r="2.4" fill="#f08a1c"/><circle cx="24" cy="9" r="2.4" fill="#f08a1c"/></svg></div>
      <div class="bg-[#3e4246]"><svg class="w-[31px] h-[39px]" viewBox="0 0 31 39"><path d="M14 8V30M3 24Q6 16 14 16Q22 16 26 24" fill="none" stroke="#5f6266"/><circle cx="14" cy="16" r="2.6" fill="#65686c"/></svg></div>
      <div class="bg-[#005a82]"><svg class="w-[31px] h-[39px]" viewBox="0 0 31 39"><circle cx="14" cy="18" r="11.5" fill="none" stroke="#fff" stroke-width="1.3"/><circle cx="14" cy="18" r="2.4" fill="#f08a1c"/></svg></div>
      <div><svg class="w-[31px] h-[39px]" viewBox="0 0 31 39"><circle cx="14" cy="18" r="9" fill="none" stroke="#555"/><circle cx="14" cy="9" r="2.6" fill="#5c5c5c"/><circle cx="14" cy="27" r="2.6" fill="#5c5c5c"/><circle cx="5" cy="18" r="2.6" fill="#5c5c5c"/><circle cx="23" cy="18" r="2.6" fill="#5c5c5c"/></svg></div>

      <div><svg class="w-[31px] h-[39px]" viewBox="0 0 31 39"><path d="M14 7V29M3 18H25" stroke="#fff" stroke-width="1.3"/><circle cx="14" cy="18" r="2.6" fill="#f08a1c"/></svg></div>
      <div><svg class="w-[31px] h-[39px]" viewBox="0 0 31 39"><path d="M23 8Q12 14 9 24V30" fill="none" stroke="#525252"/><circle cx="9" cy="24" r="2.4" fill="#5c5c5c"/></svg></div>
      <div><svg class="w-[31px] h-[39px]" viewBox="0 0 31 39"><path d="M3 25Q4 13 12 8L25 13Q19 20 18 30Z" fill="#5a5a5a"/><circle cx="14" cy="16" r="2.4" fill="#777"/></svg></div>
      <div><svg class="w-[31px] h-[39px]" viewBox="0 0 31 39"><path d="M3 20Q5 11 14 7L26 12Q19 20 18 29L6 26Z" fill="#5a5a5a"/><path d="M8 11L14 16L18 29M3 20L14 16L26 12" fill="none" stroke="#6e6e6e" stroke-width="0.8"/><circle cx="14" cy="16" r="2.2" fill="#777"/></svg></div>

      <div><svg class="w-[31px] h-[39px]" viewBox="0 0 31 39"><path d="M15 12L27 19L15 26L3 19Z" fill="#4e4e4e" stroke="#626262"/><path d="M9 15.5L21 22.5M21 15.5L9 22.5M6 17.2L18 24.2M12 13.8L24 20.8M18 13.8L6 20.8M24 17.2L12 24.2" stroke="#6a6a6a" stroke-width="0.7" fill="none"/></svg></div>
      <div class="bg-[#005a82]"><svg class="w-[31px] h-[39px]" viewBox="0 0 31 39"><path d="M3 9Q12 12 19 20L27 25M3 24Q9 19 19 20" fill="none" stroke="#fff" stroke-width="1.3"/><circle cx="19" cy="20" r="2.4" fill="#f08a1c"/></svg></div>
    </div>
    <div class="w-[124px] h-px bg-[#111]"></div>
    <div class="h-[27px] pl-[6px] leading-[25px]">设置</div>
    <div class="w-[31px] h-[39px] bg-[#005a82] flex items-center justify-center">
      <svg class="w-[28px] h-[28px]" viewBox="0 0 48 48"><use href="#snap"/><circle cx="24" cy="24" r="5.5" fill="#f08a1c"/></svg>
    </div>
    <div class="-ml-px mt-px h-[10px] bg-[#5c5c5c] flex justify-end items-end pr-[2px] pb-px"><span class="w-[6px] h-[6px] border-r-2 border-b-2 border-dotted border-[#2a2a2a]"></span></div>
    <span class="absolute left-[129px] top-[9px] w-0 h-0 border-x-[4px] border-x-transparent border-b-[4px] border-b-white"></span>
    <span class="absolute left-[129px] top-[243px] w-0 h-0 border-x-[4px] border-x-transparent border-t-[4px] border-t-white"></span>
  </div>

  <!-- tooltip -->
  <div class="absolute left-[1166px] top-[306px] w-[341px] h-[63px] bg-[#333] border border-[#222] shadow-[4px_4px_5px_rgba(0,0,0,0.35)] flex items-center pl-[7px] text-white">
    <svg class="w-[48px] h-[48px] shrink-0" viewBox="0 0 48 48"><use href="#snap"/><path d="M24 15.5L32.5 24L24 32.5L15.5 24Z" fill="#f08a1c"/></svg>
    <div class="ml-[5px]">
      <div class="font-bold text-[16px] leading-[25px] mb-[2px]">启用捕捉点</div>
      <div class="text-[16px] leading-[24px] text-[#e6e6e6]">启用捕捉点从而可以对齐对象上的点。</div>
    </div>
  </div>
</div>

<!-- forum watermark -->
<div class="h-[233px] flex items-end justify-end pr-[3px] pb-[2px] text-[13px] text-[#666] whitespace-nowrap [font-family:'Liberation_Mono','Noto_Sans_CJK_SC',monospace]">
  UG<span class="tracking-[2px]">爱好者论坛</span>@whinny jia
</div>

</body>
</html>
